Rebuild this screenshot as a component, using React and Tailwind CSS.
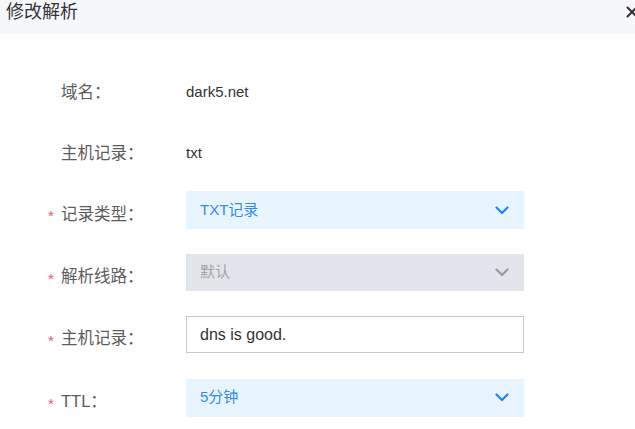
const font = { fontFamily: '"Liberation Sans", "Noto Sans CJK SC", sans-serif' };

function Label({ text, required }) {
  return (
    <div className={required ? "flex items-center w-[186px] pl-[48px] pt-[8px] shrink-0" : "flex items-center w-[186px] pl-[48px] shrink-0"}>
      <span className="w-[13px] shrink-0 text-[15px] text-[#f0507a] pt-[5px]">{required ? "*" : ""}</span>
      <span className="text-[16.5px] text-[#5c5c5c] whitespace-nowrap">{text}</span>
    </div>
  );
}

function Select({ value, disabled }) {
  return (
    <div
      className={
        disabled
          ? "flex items-center justify-between w-[338px] h-[37px] px-[14px] bg-[#e3e5ec] text-[#a3a3a3]"
          : "flex items-center justify-between w-[338px] h-[38px] px-[14px] bg-[#e8f5fe] text-[#2f8cf2]"
      }
    >
      <span className="text-[15px]">{value}</span>
      <svg width="14" height="9" viewBox="0 0 14 9" className="mr-[1px]">
        <path
          d="M1.5 1.5 L7 7 L12.5 1.5"
          fill="none"
          stroke={disabled ? "#9a9a9a" : "#1f86f3"}
          strokeWidth="2.2"
          strokeLinecap="round"
          strokeLinejoin="round"
        />
      </svg>
    </div>
  );
}

export default function App() {
  return (
    <div className="w-[635px] h-[429px] bg-white overflow-hidden" style={font}>
      {/* header */}
      <div className="flex items-start justify-between h-[34px] bg-[#f5f7fb] pl-[6px]">
        <span className="text-[18px] leading-[24px] text-[#333]">修改解析</span>
        <svg width="12" height="12" viewBox="0 0 12 12" className="mt-[6px] -mr-[3px]">
          <path d="M1.5 1.5 L10.5 10.5 M10.5 1.5 L1.5 10.5" stroke="#333" strokeWidth="2" strokeLinecap="round" />
        </svg>
      </div>

      <div className="flex flex-col pt-[39px]">
        <div className="flex h-[38px] items-center">
          <Label text="域名：" />
          <span className="text-[15px] text-[#333]">dark5.net</span>
        </div>
        <div className="flex h-[38px] items-center mt-[23px]">
          <Label text="主机记录：" />
          <span className="text-[15px] text-[#333]">txt</span>
        </div>
        <div className="flex h-[38px] items-center mt-[19px]">
          <Label text="记录类型：" required />
          <Select value="TXT记录" />
        </div>
        <div className="flex h-[37px] items-center mt-[25px]">
          <Label text="解析线路：" required />
          <Select value="默认" disabled />
        </div>
        <div className="flex h-[37px] items-center mt-[25px]">
          <Label text="主机记录：" required />
          <div className="flex items-center w-[338px] h-[37px] px-[13px] border border-[#c8c8c8] text-[16px] text-[#333]">
            dns is good.
          </div>
        </div>
        <div className="flex h-[37px] items-center mt-[26px]">
          <Label text="TTL：" required />
          <Select value="5分钟" />
        </div>
      </div>
    </div>
  );
}
